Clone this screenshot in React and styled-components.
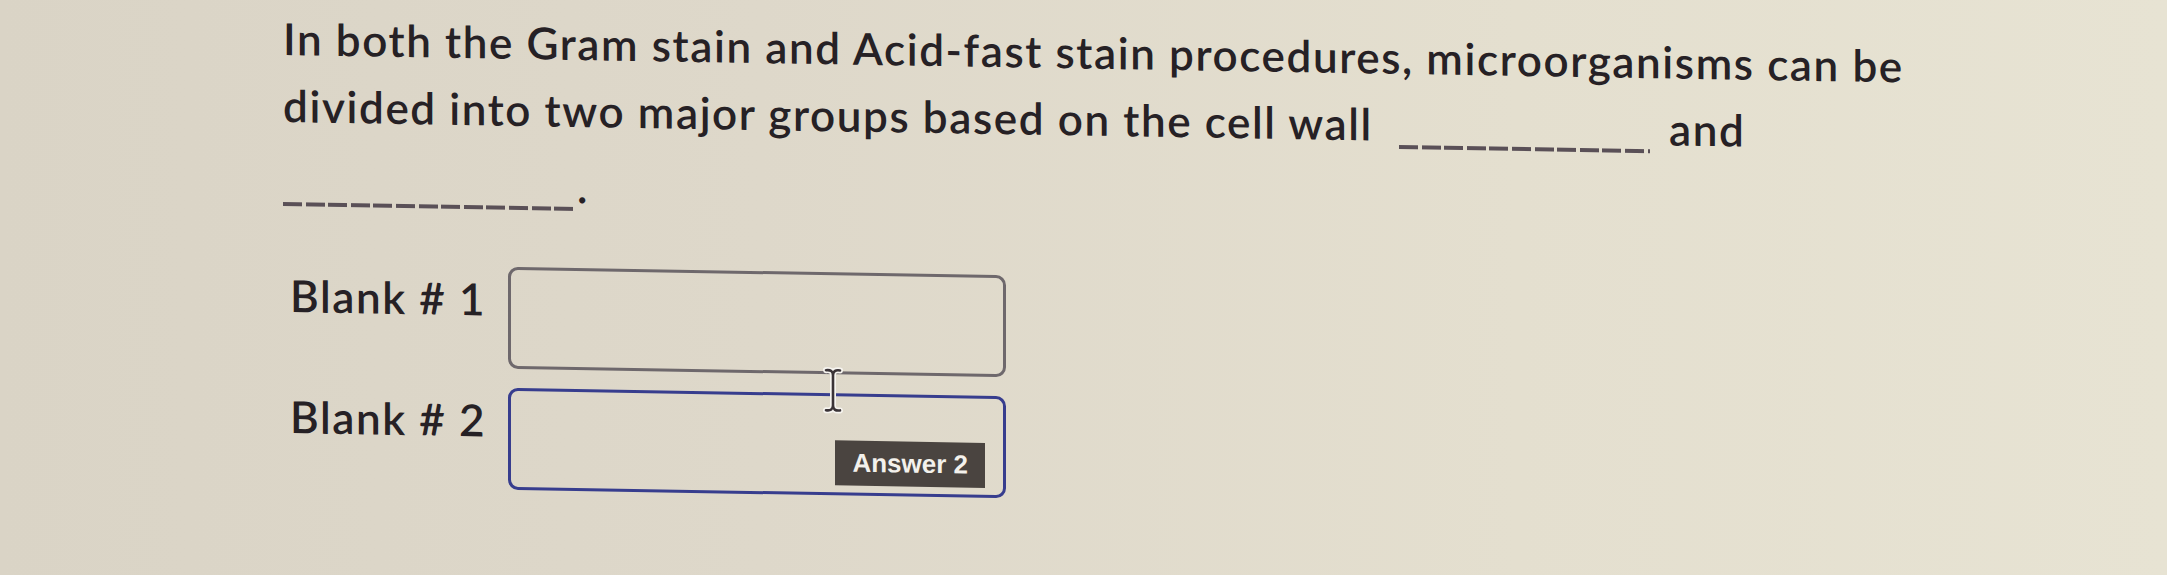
import React from 'react';
import styled, { createGlobalStyle } from 'styled-components';

const GlobalStyle = createGlobalStyle`
  html, body {
    margin: 0;
    height: 100%;
  }
  body {
    background: linear-gradient(90deg, #dad4c6 0%, #ded8ca 35%, #e4dfcf 70%, #e7e3d3 100%);
    font-family: Lato, "Noto Sans", sans-serif;
    color: #262125;
    overflow: hidden;
  }
`;

// the photo is taken at a slight angle: horizontals slope, verticals stay upright
const Sheet = styled.main`
  padding: 5px 0 0 283px;
  transform: skewY(0.97deg);
  transform-origin: 283px 0;
`;

const Question = styled.p`
  margin: 0;
  width: 1680px;
  font-size: 44px;
  line-height: 67px;
  font-weight: 600;
  letter-spacing: 1.6px;
`;

const Tail = styled.div`
  margin-top: 9px;
  font-size: 44px;
  line-height: 67px;
  font-weight: 600;
`;

const Blank = styled.span`
  display: inline-block;
  width: ${p => p.$width}px;
  height: 4px;
  margin: 0 ${p => p.$right || 0}px 0 ${p => p.$left || 0}px;
  vertical-align: -8px;
  background: repeating-linear-gradient(
    90deg,
    #5a5057 0 19px,
    transparent 19px 22.6px
  );
`;

const Answers = styled.div`
  display: grid;
  grid-template-columns: 205px 498px;
  column-gap: 20px;
  row-gap: 19px;
  margin-top: 48px;
  width: max-content;
`;

const Label = styled.label`
  padding: 7px 0 0 7px;
  font-size: 44px;
  line-height: 50px;
  font-weight: 600;
  letter-spacing: 1.6px;
  white-space: nowrap;
`;

const FieldWrap = styled.div`
  position: relative;
`;

const Input = styled.input`
  display: block;
  box-sizing: border-box;
  width: 100%;
  height: 102px;
  margin: 0;
  border: 3px solid ${p => (p.$active ? '#373d8e' : '#6e686c')};
  border-radius: 10px;
  background: transparent;
  outline: none;
`;

const Tip = styled.span`
  position: absolute;
  right: 21px;
  bottom: 10px;
  height: 45px;
  padding: 0 17px;
  background: #4a4440;
  color: #f3f1ec;
  font: 700 26px/45px "Liberation Sans", Arial, sans-serif;
`;

const Cursor = styled.svg`
  position: absolute;
  left: 316px;
  top: -25px;
  width: 18px;
  height: 44px;
  overflow: visible;
`;

const IBeam = () => (
  <Cursor viewBox="0 0 18 44">
    <g fill="none" strokeLinecap="round">
      <path d="M2 2 Q9 1 9 7 Q9 1 16 2 M9 7 V37 M2 42 Q9 43 9 37 Q9 43 16 42" stroke="#f6f4ef" strokeWidth="6" />
      <path d="M2 2 Q9 1 9 7 Q9 1 16 2 M9 7 V37 M2 42 Q9 43 9 37 Q9 43 16 42" stroke="#3a3337" strokeWidth="2.6" />
    </g>
  </Cursor>
);

export default function App() {
  return (
    <>
      <GlobalStyle />
      <Sheet>
        <Question>
          In both the Gram stain and Acid-fast stain procedures, microorganisms can be divided into two major groups based on the cell wall <Blank $width={251} $left={14} $right={6} /> and
        </Question>
        <Tail>
          <Blank $width={294} />.
        </Tail>

        <Answers>
          <Label htmlFor="blank1">Blank # 1</Label>
          <FieldWrap>
            <Input id="blank1" type="text" />
          </FieldWrap>

          <Label htmlFor="blank2">Blank # 2</Label>
          <FieldWrap>
            <Input id="blank2" type="text" $active />
            <IBeam />
            <Tip>Answer 2</Tip>
          </FieldWrap>
        </Answers>
      </Sheet>
    </>
  );
}
